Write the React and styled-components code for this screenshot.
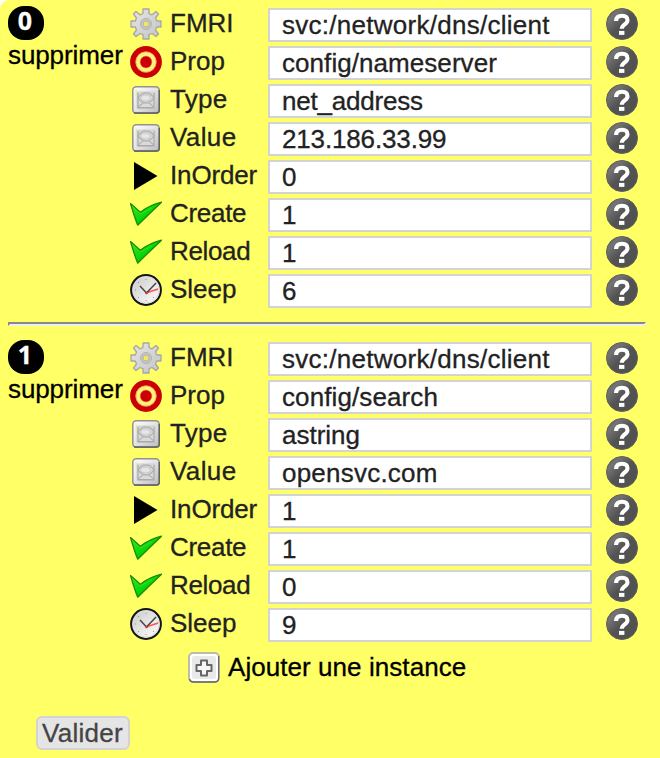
import React from "react";
import styled, { createGlobalStyle } from "styled-components";

const GlobalStyle = createGlobalStyle`
  * { box-sizing: border-box; }
  body {
    margin: 0;
    background: #fff;
    overflow: hidden;
    font: 26px/30px "Liberation Sans", Arial, sans-serif;
    color: #000;
    -webkit-text-stroke: .3px;
  }
`;

const Panel = styled.main`
  width: 660px;
  height: 758px;
  padding: 6px 14px 0 8px;
  background: #ffff66;
  border-top-left-radius: 9px;
`;

const Instance = styled.section`
  display: flex;
  height: 302px;
`;

const Identity = styled.div`
  width: 122px;
  flex: none;
`;

const Badge = styled.div`
  width: 36px;
  height: 34px;
  padding-right: 2px;
  border-radius: 16px;
  background: #000;
  color: #fff;
  font: bold 25px/29px "Open Sans", "Liberation Sans", sans-serif;
  text-align: center;
`;

const Remove = styled.div`
  line-height: 30px;
  letter-spacing: -.1px;
`;

const Fields = styled.div`
  display: flex;
  flex-direction: column;
  gap: 4px;
  padding-top: 2px;
`;

const Field = styled.div`
  display: grid;
  grid-template-columns: 40px 98px 324px 32px;
  height: 34px;
  color: #222;

  > :last-child { margin-left: 14px; }
`;

const Label = styled.label`
  line-height: 30px;
  white-space: nowrap;
  letter-spacing: ${(p) => p.$tracking || 0}px;
`;

const Input = styled.input`
  width: 324px;
  height: 34px;
  padding: 0 12px;
  border: 2px solid #d3d3d3;
  border-radius: 0;
  outline: none;
  background: #fff;
  color: #222;
  font: 26px/30px "Liberation Sans", Arial, sans-serif;
  letter-spacing: ${(p) => p.$tracking || 0}px;
  -webkit-text-stroke: .3px;
`;

const Icon = styled.svg`
  display: block;
  width: 32px;
  height: 32px;
  flex: none;
`;

const Rule = styled.hr`
  width: 638px;
  height: 4px;
  margin: 14px 0;
  border: 2px solid;
  border-color: #888 #eee #eee #888;
`;

const AddRow = styled.div`
  display: flex;
  gap: 8px;
  margin: 10px 0 0 180px;
  line-height: 30px;
  letter-spacing: .06px;
`;

const Submit = styled.button`
  display: block;
  width: 94px;
  height: 34px;
  margin: 32px 0 0 28px;
  padding: 0 1px 0 0;
  border: 2px solid #d3d3d3;
  border-radius: 6px;
  background: #e5e5e5;
  color: #444;
  font: 26px/30px "Liberation Sans", Arial, sans-serif;
  letter-spacing: .25px;
  -webkit-text-stroke: .3px;
`;

function Gear() {
  return (
    <Icon viewBox="0 0 32 32">
      <defs>
        <linearGradient id="steel" x2="1" y2="1">
          <stop stopColor="#e6e6e6" />
          <stop offset="1" stopColor="#c4c4c4" />
        </linearGradient>
      </defs>
      <path
        d="M13 1h6v4.500l3 1.300L26 3.500 28.500 6l-3 4 1.300 3H31v6h-4.300l-1.200 3 3 4-2.500 2.500-4-3-3 1.200V31h-6v-4.300l-3-1.200-4 3L3.500 26l3-4-1.200-3H1v-6h4.300l1.200-3-3-4L6 3.500l4 3.300 3-1.300z"
        fill="url(#steel)" stroke="#a6a6a6" strokeWidth="1.300" strokeLinejoin="round"
      />
      <circle cx="16" cy="16" r="5.500" fill="#c4c4c4" stroke="#b4b4b4" />
      <circle cx="16" cy="16" r="3" fill="#eee968" stroke="#bcb99a" />
    </Icon>
  );
}

function Target() {
  return (
    <Icon viewBox="0 0 32 32">
      <circle cx="16" cy="16" r="13.200" fill="#fff27b" stroke="#cc0004" strokeWidth="5.400" />
      <circle cx="16" cy="16" r="10.300" fill="none" stroke="#e47b4a" strokeWidth=".7" />
      <circle cx="16" cy="16" r="5.900" fill="#cc0004" stroke="#e2894a" strokeWidth=".5" />
    </Icon>
  );
}

function Chip() {
  return (
    <Icon viewBox="0 0 32 32">
      <defs>
        <linearGradient id="plate" x2="1" y2="1">
          <stop stopColor="#fff" />
          <stop offset=".5" stopColor="#e3e3e3" />
          <stop offset="1" stopColor="#bbb" />
        </linearGradient>
      </defs>
      <rect x="2.800" y="2.800" width="26.400" height="26.400" rx="3.500" fill="url(#plate)" stroke="#929292" strokeWidth="1.500" />
      <path d="M4 29h22.500q2.800 0 2.800-2.800V6" fill="none" stroke="#606060" strokeWidth="1.400" />
      <rect x="7" y="8" width="18" height="16" fill="#dadada" stroke="#d0d0d0" />
      <path d="M8 14q3-5 8-5t8 5q-4 5-8 5t-8-5M8 23l5-4M24 23l-5-4" fill="none" stroke="#b5b5b5" strokeWidth="1.300" />
      <ellipse cx="15.500" cy="14" rx="5" ry="3" fill="#e5e5e5" stroke="#c5c5c5" />
      <path d="M8 9v15h16V9M8 23.500h16" fill="none" stroke="#aaa" strokeWidth="1.200" />
      <path d="M6 5v8" stroke="#eeea86" />
    </Icon>
  );
}

function Arrow() {
  return <Icon viewBox="0 0 32 32"><path d="M4 2L27.500 16 4 30z" fill="#000" /></Icon>;
}

function Check() {
  return (
    <Icon viewBox="0 0 32 32">
      <defs>
        <linearGradient id="leaf" x2="1" y2="1">
          <stop stopColor="#46e51c" />
          <stop offset=".5" stopColor="#08d70a" />
          <stop offset="1" stopColor="#078000" />
        </linearGradient>
      </defs>
      <path d="M.5 5.500L10.300 14.200Q20 7 31.500 4.200 19 16 7.700 27.200 5 21 .5 5.500z" fill="url(#leaf)" stroke="#148a00" strokeWidth="1.200" strokeLinejoin="round" />
      <path d="M2 8l8.200 8L22 10" fill="none" stroke="#38e425" strokeWidth=".8" />
    </Icon>
  );
}

function Clock() {
  return (
    <Icon viewBox="0 0 32 32">
      <defs>
        <linearGradient id="dial" x2="1" y2="1">
          <stop stopColor="#c6c6c6" /><stop offset=".55" stopColor="#e8e8e8" /><stop offset="1" stopColor="#fff" />
        </linearGradient>
      </defs>
      <circle cx="16" cy="16" r="14.900" fill="url(#dial)" stroke="#151515" strokeWidth="2" />
      <circle cx="16" cy="16" r="13" fill="none" stroke="#ddd" />
      <path d="M16 5v1M16 26v1M5 16h1M26 16h1M8 8l1 1M23 23l1 1M8 24l1-1" stroke="#999" />
      <path d="M16 19l12-4" stroke="#f55" strokeWidth="1.500" />
      <path d="M10 12l6.500 7L26 9" fill="none" stroke="#444" strokeWidth="1.500" />
      <circle cx="16.500" cy="19" r="1.300" fill="#c33" />
    </Icon>
  );
}

function Help() {
  return (
    <Icon viewBox="0 0 32 32">
      <defs>
        <linearGradient id="bubble" x2="1" y2="1">
          <stop stopColor="#555" /><stop offset=".23" stopColor="#747474" />
          <stop offset=".5" stopColor="#535353" /><stop offset="1" stopColor="#505050" />
        </linearGradient>
      </defs>
      <circle cx="16" cy="16" r="15.500" fill="url(#bubble)" stroke="#60605a" />
      <path d="M10 13Q10.300 7.700 16 7.700c3.700 0 5.500 1.600 5.500 4.500 0 4.300-5.700 4.200-5.700 8.600" fill="none" stroke="#fff" strokeWidth="4.100" />
      <path d="M13 22.900h5.400v4H13z" fill="#fff" />
    </Icon>
  );
}

function Plus() {
  return (
    <Icon viewBox="0 0 32 32">
      <rect x="1" y="1" width="30" height="29" rx="4" fill="#eee" stroke="#aaa" strokeWidth="1.500" />
      <path d="M1.500 27q1 3 4 3h21q4 0 4-4V4" fill="none" stroke="#686868" strokeWidth="1.500" />
      <rect x="3" y="3" width="26" height="25" rx="3" fill="#e9e9e9" stroke="#fff" strokeWidth="2" />
      <path d="M13 8.500h6V13h4.500v6H19v4.500h-6V19H8.500v-6H13z" fill="#f7f7f7" stroke="#666" strokeWidth="2" strokeLinejoin="round" />
    </Icon>
  );
}

const fields = [
  { name: "FMRI", Glyph: Gear },
  { name: "Prop", Glyph: Target },
  { name: "Type", Glyph: Chip, tracking: .3 },
  { name: "Value", Glyph: Chip, tracking: .4 },
  { name: "InOrder", Glyph: Arrow, tracking: -.15 },
  { name: "Create", Glyph: Check, tracking: -.3 },
  { name: "Reload", Glyph: Check, tracking: -.35 },
  { name: "Sleep", Glyph: Clock },
];

const instances = [
  [
    { text: "svc:/network/dns/client", tracking: .27 },
    { text: "config/nameserver", tracking: .06 },
    { text: "net_address", tracking: -.2 },
    { text: "213.186.33.99", tracking: -.15 },
    { text: "0" }, { text: "1" }, { text: "1" }, { text: "6" },
  ],
  [
    { text: "svc:/network/dns/client", tracking: .27 },
    { text: "config/search", tracking: .1 },
    { text: "astring" },
    { text: "opensvc.com", tracking: .22 },
    { text: "1" }, { text: "1" }, { text: "0" }, { text: "9" },
  ],
];

export default function App() {
  return (
    <>
      <GlobalStyle />
      <Panel>
        {instances.map((values, index) => (
          <React.Fragment key={index}>
            {index > 0 && <Rule />}
            <Instance>
              <Identity>
                <Badge>{index}</Badge>
                <Remove>supprimer</Remove>
              </Identity>
              <Fields>
                {fields.map(({ name, Glyph, tracking }, i) => (
                  <Field key={name}>
                    <Glyph />
                    <Label $tracking={tracking}>{name}</Label>
                    <Input aria-label={name} defaultValue={values[i].text} $tracking={values[i].tracking} />
                    <Help />
                  </Field>
                ))}
              </Fields>
            </Instance>
          </React.Fragment>
        ))}
        <AddRow><Plus /><span>Ajouter une instance</span></AddRow>
        <Submit>Valider</Submit>
      </Panel>
    </>
  );
}
